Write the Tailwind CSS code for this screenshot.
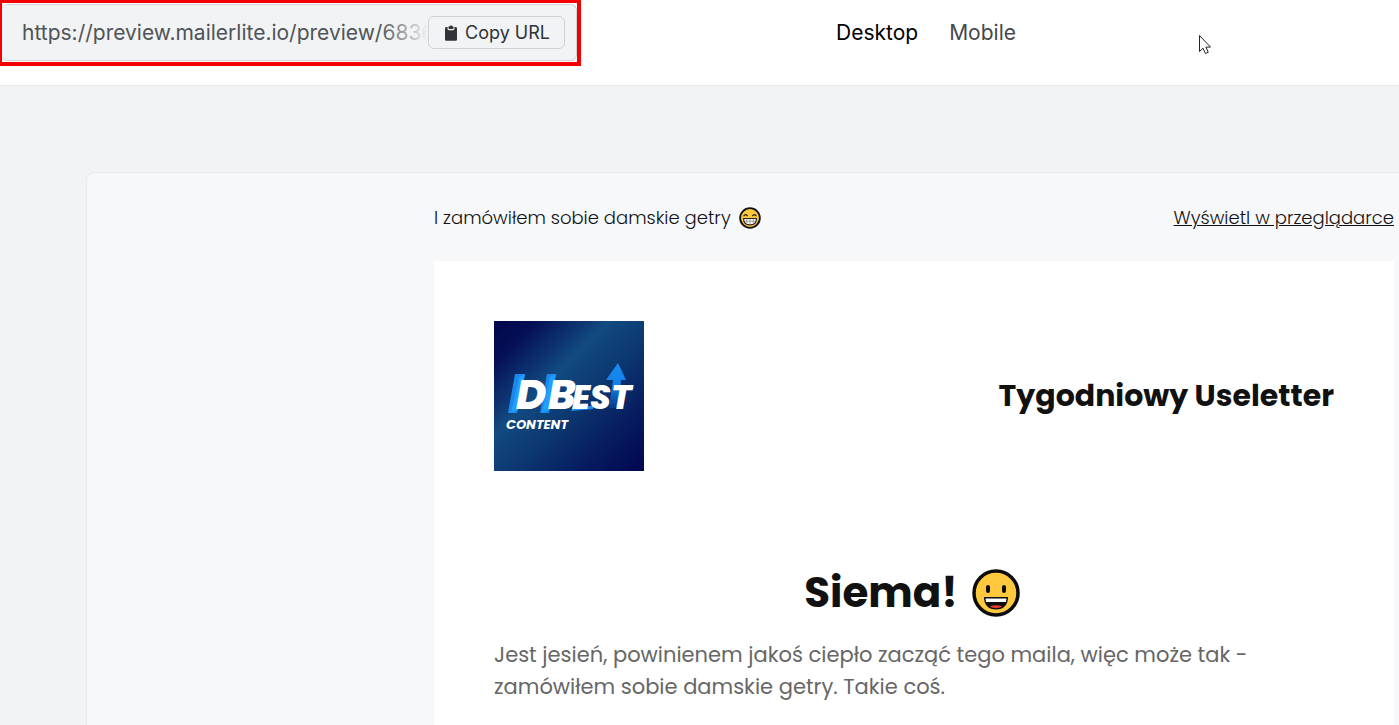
<!DOCTYPE html>
<html lang="pl">
<head>
    <meta charset="UTF-8">
    <meta name="viewport" content="width=device-width, initial-scale=1.0">
    <title>Tygodniowy Useletter</title>
    <script src="https://cdn.jsdelivr.net/npm/@tailwindcss/browser@4"></script>
</head>
<body class="min-h-screen flex flex-col overflow-x-hidden bg-[#f1f3f5] font-['Inter',sans-serif]">

    <!-- Top bar -->
    <header class="flex items-start h-[86px] bg-white border-b border-[#e9ebee]">
        <div class="w-[581px] shrink-0 h-[66px] border-4 border-l-2 border-t-3 border-[#f40000] pt-px pb-px">
            <div class="flex items-center h-full pl-5 pr-[11px] bg-[#f1f3f5] border-y border-r border-[#cfd4d9] rounded-md">
                <div class="relative flex-1 min-w-0">
                    <input type="text" readonly aria-label="Preview URL" value="https://preview.mailerlite.io/preview/683694" class="block w-full text-[21px] leading-8 text-[#505357] bg-transparent outline-none">
                    <div class="absolute inset-y-0 right-0 w-12 bg-linear-to-r from-[#f1f3f5]/0 to-[#f1f3f5]"></div>
                </div>
                <button type="button" class="flex items-center shrink-0 gap-1.5 h-[33px] px-3.5 border border-[#cfd1d8] rounded-md text-lg text-[#303338]">
                    <svg class="w-4 h-4" viewBox="0 0 16 16" fill="currentColor" aria-hidden="true">
                        <path d="M3.500 2h1v1.600c0 .9.700 1.600 1.600 1.600h3.800c.9 0 1.600-.7 1.600-1.600V2h1c.9 0 1.500.7 1.500 1.500v10.700c0 .9-.6 1.600-1.500 1.600h-9c-.9 0-1.500-.7-1.500-1.600V3.500C2 2.700 2.600 2 3.500 2z"/>
                        <path d="M6 1.200h1C7.200.5 7.500.2 8 .2s.8.300 1 1h1c.3 0 .5.200.5.500v1.600c0 .4-.3.700-.7.700H6.200c-.4 0-.7-.3-.7-.7V1.700c0-.3.200-.5.500-.5z"/>
                    </svg>
                    Copy URL
                </button>
            </div>
        </div>
        <nav class="flex gap-[31px] ml-[255px] pt-[17px] text-[21px] leading-8">
            <a href="#desktop" class="text-black">Desktop</a>
            <a href="#mobile" class="text-[#45484c]">Mobile</a>
        </nav>
    </header>

    <!-- Email preview -->
    <main class="flex-1 flex pt-[86px] pl-[86px]">
        <div class="flex-1 bg-[#f7f8fa] border border-r-0 border-[#e8eaed] rounded-l-lg pl-[347px] pr-[5px]">
            <div class="flex items-center justify-between h-[88px] pt-0.5 text-lg text-[#111111] font-['Poppins','Inter',sans-serif]">
                <p class="flex items-center gap-2 font-light">
                    I zamówiłem sobie damskie getry
                    <svg class="w-[22px] h-[22px]" viewBox="0 0 48 48" role="img" aria-label="uśmiech">
                        <circle cx="24" cy="24" r="21.500" fill="#ffc83d" stroke="#111" stroke-width="4"/>
                        <path d="M10 20q4-7 9 0M29 20q5-7 9 0" fill="none" stroke="#111" stroke-width="2.500"/>
                        <path d="M10 25h28c0 9-5 14-14 14s-14-5-14-14z" fill="#fff" stroke="#222" stroke-width="2.500"/>
                        <path d="M11 31h26M17 26v10M24 26v12M31 26v10" stroke="#777" stroke-width="1.500"/>
                    </svg>
                </p>
                <a href="#browser" class="font-light underline">Wyświetl w przeglądarce</a>
            </div>

            <article class="bg-white px-[60px] pt-[60px] pb-12 text-[#111111] font-['Poppins','Inter',sans-serif]">
                <div class="flex items-center justify-between">
                    <svg class="w-[150px] h-[150px]" viewBox="0 0 150 150" role="img" aria-label="DBest Content">
                        <defs>
                            <linearGradient id="night" x1="0" y1="0" x2="1" y2="1">
                                <stop offset="0" stop-color="#02064a"/>
                                <stop offset=".14" stop-color="#050f55"/>
                                <stop offset=".38" stop-color="#124a80"/>
                                <stop offset=".54" stop-color="#0d3a72"/>
                                <stop offset=".8" stop-color="#061a5e"/>
                                <stop offset="1" stop-color="#020650"/>
                            </linearGradient>
                            <linearGradient id="arrow" x1="0" y1="0" x2="0" y2="1">
                                <stop offset="0" stop-color="#168bf5"/>
                                <stop offset=".5" stop-color="#1680e8"/>
                                <stop offset="1" stop-color="#073a88"/>
                            </linearGradient>
                        </defs>
                        <rect width="150" height="150" fill="url(#night)"/>
                        <path d="M21 53h10l-8 39H14z" fill="#1c86ee"/>
                        <path d="M25 56l6-3-7 36-7 3z" fill="#1fa0ff"/>
                        <path d="M53 53h9l-7 39h-9z" fill="#1c86ee"/>
                        <path d="M56 56l6-3-7 36-7 3z" fill="#1fa0ff"/>
                        <path d="M79 85l20 0 0 3-22 2z" fill="#1c8df5"/>
                        <path d="M124 42l8 17h-5l-2 28h-10l4-28h-7z" fill="url(#arrow)"/>
                        <g fill="#fff" font-family="Poppins, 'Open Sans', sans-serif" font-style="italic" font-weight="800">
                            <text x="22" y="88" font-size="41">D</text>
                            <text x="54" y="88" font-size="41">B</text>
                            <text x="78" y="88" font-size="33">ES</text>
                            <text x="117" y="88" font-size="34">T</text>
                            <text x="12" y="108" font-size="13" font-weight="700">CONTENT</text>
                        </g>
                    </svg>
                    <h2 class="text-3xl leading-10 font-bold">Tygodniowy Useletter</h2>
                </div>

                <h1 class="flex items-center justify-center gap-3.5 pr-1 mt-[90px] text-[42px] leading-[63px] font-bold">
                    Siema!
                    <svg class="w-12 h-12" viewBox="0 0 48 48" role="img" aria-label="szeroki uśmiech">
                        <circle cx="24" cy="24" r="22" fill="#ffc83d" stroke="#0c0c0c" stroke-width="3.500"/>
                        <rect x="14" y="16" width="4" height="8" rx="2" fill="#0c0c0c"/>
                        <rect x="30" y="16" width="4" height="8" rx="2" fill="#0c0c0c"/>
                        <path d="M12 28h24c0 8-4.500 12.500-12 12.500S12 36 12 28z" fill="#0c0c0c"/>
                        <path d="M13.500 29.500h21l-.6 3.500H14.100z" fill="#fff"/>
                        <path d="M18 37.500c2-1.500 3.500-.5 6-1.500 2.500 1 4 0 6 1.500-3 2.300-9 2.300-12 0z" fill="#e8382e"/>
                    </svg>
                </h1>
                <p class="mt-[15px] text-[21px] leading-8 text-[#666666]">Jest jesień, powinienem jakoś ciepło zacząć tego maila, więc może tak - zamówiłem sobie damskie getry. Takie coś.</p>
            </article>
        </div>
    </main>

    <!-- Pointer -->
    <svg class="absolute left-[1198px] top-[34px] w-[14px] h-[21px]" viewBox="0 0 14 21" aria-hidden="true">
        <path d="M1.500 1.500v16l3.500-3.300 2.500 5.300 2.800-1.300-2.400-5.100h4.600z" fill="#fff" stroke="#222" stroke-width="1"/>
    </svg>

</body>
</html>
